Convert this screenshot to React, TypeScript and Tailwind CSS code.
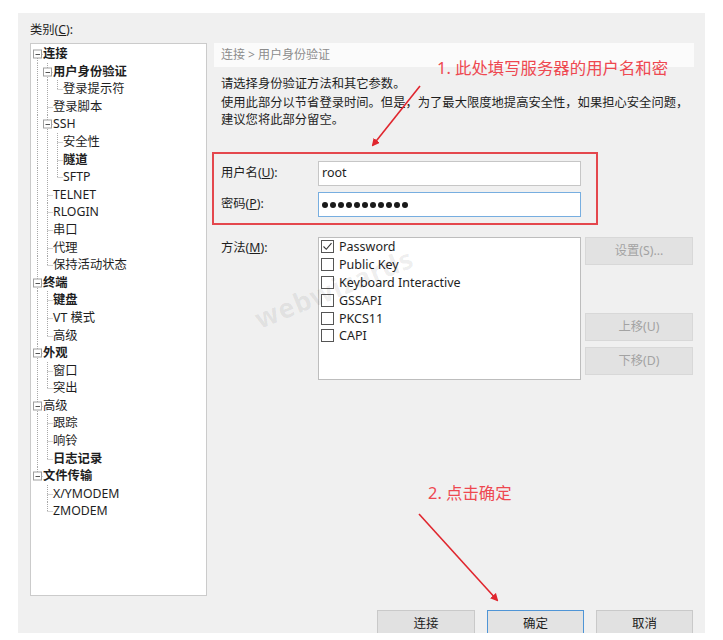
import React from 'react';

type Node = { label: string; bold?: boolean; children?: Node[] };

const TREE: Node[] = [
    {
        label: '连接', bold: true, children: [
            { label: '用户身份验证', bold: true, children: [{ label: '登录提示符' }] },
            { label: '登录脚本' },
            { label: 'SSH', children: [{ label: '安全性' }, { label: '隧道', bold: true }, { label: 'SFTP' }] },
            { label: 'TELNET' },
            { label: 'RLOGIN' },
            { label: '串口' },
            { label: '代理' },
            { label: '保持活动状态' },
        ],
    },
    { label: '终端', bold: true, children: [{ label: '键盘', bold: true }, { label: 'VT 模式' }, { label: '高级' }] },
    { label: '外观', bold: true, children: [{ label: '窗口' }, { label: '突出' }] },
    { label: '高级', children: [{ label: '跟踪' }, { label: '响铃' }, { label: '日志记录', bold: true }] },
    { label: '文件传输', bold: true, children: [{ label: 'X/YMODEM' }, { label: 'ZMODEM' }] },
];

type Row = { node: Node; depth: number; guides: boolean[]; hasNext: boolean; first: boolean };

const flatten = (nodes: Node[], depth: number, guides: boolean[], out: Row[]) => {
    nodes.forEach((node, i) => {
        const hasNext = i < nodes.length - 1;
        out.push({ node, depth, guides, hasNext, first: depth === 0 && i === 0 });
        if (node.children) flatten(node.children, depth + 1, [...guides, hasNext], out);
    });
    return out;
};

const ROWS = flatten(TREE, 0, [], []);
const ROW_H = 17.6;

const FONT = "font-['Noto_Sans','Noto_Sans_CJK_SC',sans-serif]";

const TreeRow: React.FC<{ row: Row }> = ({ row }) => {
    const { node, depth, guides, hasNext, first } = row;
    const w = 12 + depth * 10;
    const mid = 9;
    const cx = 6.5 + depth * 10;
    return (
        <div className="flex items-center h-[17.6px]">
            <svg width={w} height={ROW_H} className="shrink-0">
                {guides.map((g, a) =>
                    g ? <line key={a} x1={6.5 + a * 10} y1={0} x2={6.5 + a * 10} y2={ROW_H} stroke="#a8a8a8" strokeDasharray="1 1" /> : null
                )}
                <line x1={cx} y1={first ? mid : 0} x2={cx} y2={hasNext ? ROW_H : mid} stroke="#a8a8a8" strokeDasharray="1 1" />
                <line x1={cx} y1={mid + 0.5} x2={cx + 5} y2={mid + 0.5} stroke="#a8a8a8" strokeDasharray="1 1" />
                {node.children && (
                    <g>
                        <rect x={cx - 4} y={mid - 4} width={8} height={8} fill="#fff" stroke="#a0a0a0" />
                        <line x1={cx - 2} y1={mid + 0.5} x2={cx + 2.5} y2={mid + 0.5} stroke="#555" />
                    </g>
                )}
            </svg>
            <span className={`text-[12.3px] leading-[17.6px] whitespace-nowrap text-[#1e1e1e] ${node.bold ? 'font-bold' : ''}`}>
                {node.label}
            </span>
        </div>
    );
};

const Checkbox: React.FC<{ checked?: boolean }> = ({ checked }) => (
    <div className="w-[13px] h-[13px] border border-[#555] bg-white flex items-center justify-center shrink-0">
        {checked && (
            <svg width="11" height="11" viewBox="0 0 11 11">
                <path d="M1.5 5.5 L4.3 8.3 L9.5 2.2" fill="none" stroke="#333" strokeWidth="1.1" />
            </svg>
        )}
    </div>
);

const SideButton: React.FC<{ label: string; className?: string }> = ({ label, className }) => (
    <div className={`w-[108px] flex items-center justify-center bg-[#e2e2e2] border border-[#d8d8d8] text-[12.3px] text-[#a3a3a3] ${className ?? ''}`}>
        {label}
    </div>
);

const BottomButton: React.FC<{ label: string; active?: boolean; w: string }> = ({ label, active, w }) => (
    <div
        className={`${w} h-[28px] flex items-center justify-center text-[12.5px] text-[#1e1e1e] ${
            active ? 'bg-[#e3e3e3] border border-[#4f95d6]' : 'bg-[#e1e1e1] border border-[#c9c9c9]'
        }`}
    >
        {label}
    </div>
);

const METHODS = ['Password', 'Public Key', 'Keyboard Interactive', 'GSSAPI', 'PKCS11', 'CAPI'];

export default function App() {
    return (
        <div className={`relative w-[723px] h-[640px] bg-white pt-[13px] pl-[18px] overflow-hidden ${FONT}`}>
            <div className="w-[687px] h-[620px] bg-[#f0f0f0] overflow-hidden flex flex-col">
                <div className="flex pl-[12px]">
                    {/* category tree */}
                    <div className="w-[177px] shrink-0">
                        <div className="h-[30px] pt-[8px] text-[12.3px] leading-[17px] text-[#1e1e1e]">
                            类别(<span className="underline">C</span>):
                        </div>
                        <div className="h-[553px] bg-white border border-[#cbcbcb] pt-[1px]">
                            {ROWS.map((r, i) => (
                                <TreeRow key={i} row={r} />
                            ))}
                        </div>
                    </div>

                    {/* right panel */}
                    <div className="ml-[7px] w-[480px] pt-[30px] text-[#1e1e1e]">
                        <div className="h-[24px] bg-[#fbfbfb] pl-[7px] flex items-center text-[12px] text-[#8c8c8c]">
                            连接 &gt; 用户身份验证
                        </div>
                        <div className="pl-[7px] mt-[8px] text-[12.3px] leading-[18px]">请选择身份验证方法和其它参数。</div>
                        <div className="pl-[7px] mt-[1px] text-[12.3px] leading-[17px]">
                            使用此部分以节省登录时间。但是，为了最大限度地提高安全性，如果担心安全问题，
                            <br />
                            建议您将此部分留空。
                        </div>

                        <div className="mt-[24px] -ml-[2px] w-[386px] h-[73px] border-2 border-[#e4474d] pt-[7px] pl-[7px] flex flex-col gap-[6px]">
                            <div className="flex items-center">
                                <div className="w-[97px] text-[12.3px]">
                                    用户名(<span className="underline">U</span>):
                                </div>
                                <div className="w-[263px] h-[25px] bg-white border border-[#c6c6c6] flex items-center pl-[3px] text-[12.5px]">
                                    root
                                </div>
                            </div>
                            <div className="flex items-center">
                                <div className="w-[97px] text-[12.3px]">
                                    密码(<span className="underline">P</span>):
                                </div>
                                <div className="w-[263px] h-[25px] bg-white border border-[#77aee0] flex items-center pl-[3px] gap-[2px]">
                                    {Array.from({ length: 11 }).map((_, i) => (
                                        <div key={i} className="w-[6px] h-[6px] rounded-full bg-[#1a1a1a]" />
                                    ))}
                                </div>
                            </div>
                        </div>

                        <div className="mt-[12px] flex">
                            <div className="w-[104px] pl-[7px] pt-[2px] text-[12.3px] leading-[17px]">
                                方法(<span className="underline">M</span>):
                            </div>
                            <div className="w-[263px] h-[143px] bg-white border border-[#bdbdbd] pl-[2px]">
                                {METHODS.map((m, i) => (
                                    <div key={m} className="flex items-center gap-[5px] h-[17.8px]">
                                        <Checkbox checked={i === 0} />
                                        <span className="text-[12.5px] leading-[17px]">{m}</span>
                                    </div>
                                ))}
                            </div>
                            <div className="ml-[4px] flex flex-col">
                                <SideButton label="设置(S)..." className="h-[28px]" />
                                <SideButton label="上移(U)" className="h-[28px] mt-[48px]" />
                                <SideButton label="下移(D)" className="h-[28px] mt-[6px]" />
                            </div>
                        </div>
                    </div>
                </div>

                <div className="mt-[14px] flex justify-end pr-[12px] gap-[12px]">
                    <BottomButton label="连接" w="w-[98px]" />
                    <BottomButton label="确定" w="w-[97px]" active />
                    <BottomButton label="取消" w="w-[97px]" />
                </div>
            </div>

            {/* watermark */}
            <div className="absolute left-[256px] top-[300px] -rotate-[22deg] origin-left text-[27px] font-bold tracking-[1px] text-black/[0.07] pointer-events-none font-['Noto_Sans',sans-serif]">
                webwizards
            </div>

            {/* annotations */}
            <div className="absolute left-[437px] top-[56px] text-[16.4px] leading-[24px] text-[#ee4850] whitespace-nowrap">
                1. 此处填写服务器的用户名和密
            </div>
            <div className="absolute left-[428px] top-[481px] text-[16.4px] leading-[24px] text-[#ee4850] whitespace-nowrap">
                2. 点击确定
            </div>
            <svg className="absolute left-0 top-0 pointer-events-none" width="723" height="640">
                <defs>
                    <marker id="ah" markerWidth="8" markerHeight="8" refX="6" refY="4" orient="auto" markerUnits="userSpaceOnUse">
                        <path d="M0 0 L8 4 L0 8 Z" fill="#e0262e" />
                    </marker>
                </defs>
                <line x1="420" y1="86" x2="373" y2="145" stroke="#e0262e" strokeWidth="1.6" markerEnd="url(#ah)" />
                <line x1="419" y1="514" x2="497" y2="600" stroke="#e0262e" strokeWidth="1.6" markerEnd="url(#ah)" />
            </svg>
        </div>
    );
}
